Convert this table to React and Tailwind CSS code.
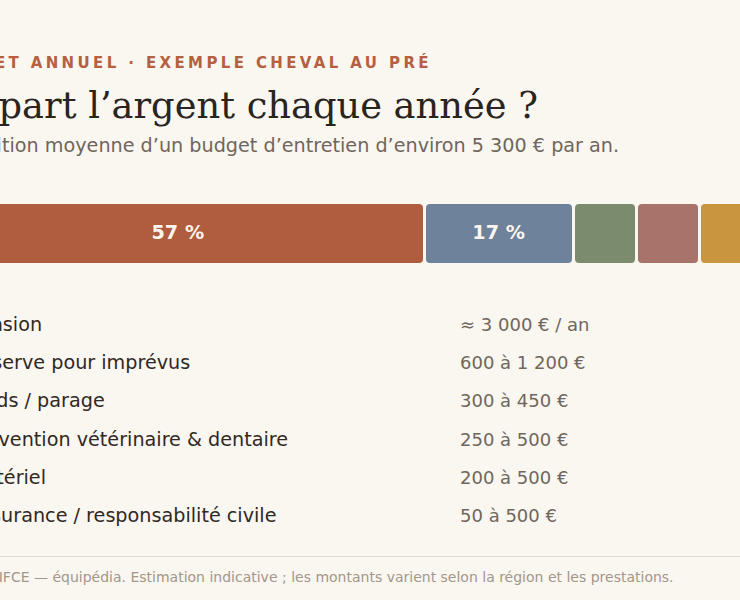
const segments = [
  { label: 'Pension', value: '≈ 3 000 € / an', pct: 57, color: 'bg-[#b05c3e]', grow: 'flex-[57]' },
  { label: 'Réserve pour imprévus', value: '600 à 1 200 €', pct: 17, color: 'bg-[#6e829b]', grow: 'flex-[17]' },
  { label: 'Pieds / parage', value: '300 à 450 €', pct: 7, color: 'bg-[#7b8b6e]', grow: 'flex-[7]' },
  { label: 'Prévention vétérinaire & dentaire', value: '250 à 500 €', pct: 7, color: 'bg-[#a8736a]', grow: 'flex-[7]' },
  { label: 'Matériel', value: '200 à 500 €', pct: 7, color: 'bg-[#c9953e]', grow: 'flex-[7]' },
  { label: 'Assurance / responsabilité civile', value: '50 à 500 €', pct: 5, color: 'bg-[#8a7f99]', grow: 'flex-[5]' },
];

const App = () => {
  return (
    <div className="bg-[#faf6f0] min-h-screen overflow-hidden flex justify-center font-['DejaVu_Sans',sans-serif]">
      <div className="w-[874px] shrink-0 pt-[53px]">

        {/* HEADER */}
        <p className="text-[15px] leading-[20px] font-bold tracking-[0.225em] text-[#b5603f] uppercase">
          Budget annuel · Exemple cheval au pré
        </p>
        <h2 className="mt-[11px] text-[36.8px] leading-[44px] text-[#2a241f] font-['DejaVu_Serif',serif]">
          Où part l’argent chaque année ?
        </h2>
        <p className="mt-[4px] text-[19.2px] leading-[28px] text-[#6f665d]">
          Répartition moyenne d’un budget d’entretien d’environ 5 300 € par an.
        </p>

        {/* BAR */}
        <div className="mt-[44px] flex gap-[3px] h-[59px]">
          {segments.map((s) => (
            <div
              key={s.label}
              className={`${s.grow} ${s.color} rounded-[4px] flex items-center justify-center text-[19.2px] font-bold text-[#fbf5ee]`}
            >
              {s.pct >= 10 ? `${s.pct} %` : ''}
            </div>
          ))}
        </div>

        {/* LEGEND */}
        <div className="mt-[43px]">
          {segments.map((s) => (
            <div key={s.label} className="grid grid-cols-[35px_492px_1fr] items-baseline h-[38.2px]">
              <span className={`inline-block w-[14px] h-[14px] rounded-[3px] ${s.color}`}></span>
              <span className="text-[19.2px] leading-[38.2px] text-[#2f2924]">{s.label}</span>
              <span className="text-[18px] leading-[38.2px] text-[#6f665d]">{s.value}</span>
            </div>
          ))}
        </div>

        {/* SOURCE */}
        <div className="mt-[21px] border-t border-[#e3dace] pt-[10px]">
          <p className="pl-[4px] text-[14px] leading-[20px] text-[#a2978a]">
            Source : IFCE — équipédia. Estimation indicative ; les montants varient selon la région et les prestations.
          </p>
        </div>

      </div>
    </div>
  );
};

export default App;
